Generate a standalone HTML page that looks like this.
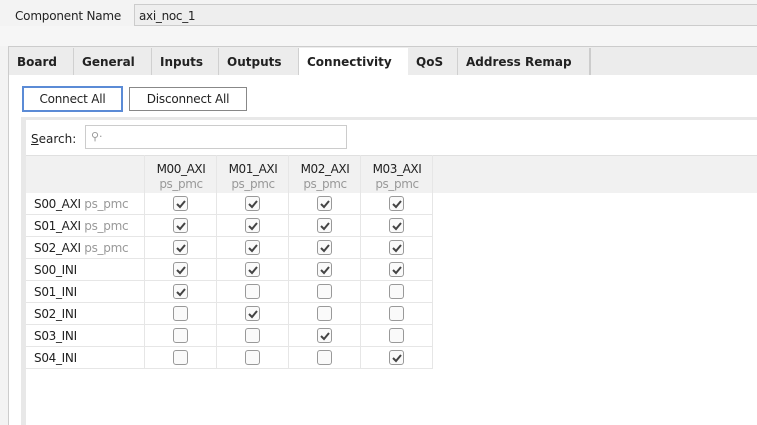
<!DOCTYPE html>
<html><head><style>
*{margin:0;padding:0;box-sizing:border-box}
body{width:757px;height:425px;background:#f3f3f3;font-family:"DejaVu Sans",sans-serif;font-size:12px;color:#222;position:relative;overflow:hidden}
.a{position:absolute}
.tab{position:absolute;top:48px;height:27px;line-height:28px;font-weight:bold;font-size:12px;padding-left:8px;border-right:1px solid #d0d0d0;color:#222}
.cb{position:absolute;width:15px;height:15px;border:1px solid #999;border-radius:3px;background:#fafafa}
.cb svg{position:absolute;left:1px;top:1px}
.rl{position:absolute;left:34px;font-size:12px;color:#222;letter-spacing:-0.3px}
.rl span{color:#999}
</style></head><body>
<div class="a" style="left:15px;top:9px;font-size:12px;letter-spacing:-0.2px">Component Name</div>
<div class="a" style="left:134px;top:4px;width:630px;height:22px;border:1px solid #ccc;background:#eee;padding:4px 4px;font-size:12px;letter-spacing:-0.3px">axi_noc_1</div>
<div class="a" style="left:0;top:26px;width:757px;height:20px;background:#f6f6f6"></div>
<div class="a" style="left:8px;top:46px;width:749px;height:379px;border-left:1px solid #ccc;border-top:1px solid #ccc;background:#ececec"></div>
<div class="a" style="left:9px;top:75px;width:748px;height:350px;background:#fff"></div>
<div class="tab" style="left:9px;width:65px">Board</div>
<div class="tab" style="left:74px;width:78px">General</div>
<div class="tab" style="left:152px;width:67px">Inputs</div>
<div class="tab" style="left:219px;width:80px">Outputs</div>
<div class="tab" style="left:299px;width:109px;background:#fff;border-right:none">Connectivity</div>
<div class="tab" style="left:408px;width:50px">QoS</div>
<div class="tab" style="left:458px;width:133px;border-right:2px solid #ccc">Address Remap</div>
<div class="a" style="left:22px;top:86px;width:101px;height:26px;border:2px solid #5b8bd6;background:#fff;text-align:center;line-height:23px;font-size:12px;letter-spacing:-0.2px">Connect All</div>
<div class="a" style="left:129px;top:87px;width:118px;height:24px;border:1px solid #888;background:#fff;text-align:center;line-height:22px;font-size:12px;letter-spacing:-0.2px">Disconnect All</div>
<div class="a" style="left:21px;top:117px;width:736px;height:308px;background:#e8e8e8"></div>
<div class="a" style="left:26px;top:120px;width:731px;height:305px;background:#fff"></div>
<div class="a" style="left:31px;top:132px;font-size:12px"><u>S</u>earch:</div>
<div class="a" style="left:85px;top:125px;width:262px;height:24px;border:1px solid #ccc;background:#fff;color:#999;padding:4px 5px;font-size:11px">⚲·</div>
<div class="a" style="left:26px;top:155px;width:731px;height:38px;background:#f1f1f1;border-top:1px solid #e0e0e0"></div>
<svg class="a" style="left:26px;top:155px" width="420" height="216">
<g stroke="#e6e6e6" stroke-width="1">
<line x1="118.5" y1="0" x2="118.5" y2="214"/><line x1="190.5" y1="0" x2="190.5" y2="214"/><line x1="262.5" y1="0" x2="262.5" y2="214"/><line x1="334.5" y1="0" x2="334.5" y2="214"/><line x1="406.5" y1="0" x2="406.5" y2="214"/>
<line x1="0" y1="59.5" x2="406" y2="59.5"/><line x1="0" y1="81.5" x2="406" y2="81.5"/><line x1="0" y1="103.5" x2="406" y2="103.5"/><line x1="0" y1="125.5" x2="406" y2="125.5"/><line x1="0" y1="147.5" x2="406" y2="147.5"/><line x1="0" y1="169.5" x2="406" y2="169.5"/><line x1="0" y1="191.5" x2="406" y2="191.5"/><line x1="0" y1="213.5" x2="406" y2="213.5"/>
</g>
<g font-family="DejaVu Sans,sans-serif" font-size="12" text-anchor="middle" letter-spacing="-0.4">
<text x="155" y="18" fill="#222">M00_AXI</text><text x="155" y="33" fill="#999">ps_pmc</text>
<text x="227" y="18" fill="#222">M01_AXI</text><text x="227" y="33" fill="#999">ps_pmc</text>
<text x="299" y="18" fill="#222">M02_AXI</text><text x="299" y="33" fill="#999">ps_pmc</text>
<text x="371" y="18" fill="#222">M03_AXI</text><text x="371" y="33" fill="#999">ps_pmc</text>
</g>
</svg>
<div class="rl" style="top:197px">S00_AXI <span>ps_pmc</span></div>
<div class="rl" style="top:219px">S01_AXI <span>ps_pmc</span></div>
<div class="rl" style="top:241px">S02_AXI <span>ps_pmc</span></div>
<div class="rl" style="top:263px">S00_INI</div>
<div class="rl" style="top:285px">S01_INI</div>
<div class="rl" style="top:307px">S02_INI</div>
<div class="rl" style="top:329px">S03_INI</div>
<div class="rl" style="top:351px">S04_INI</div>
<div id="g"></div>
<script>
var m=[[1,1,1,1],[1,1,1,1],[1,1,1,1],[1,1,1,1],[1,0,0,0],[0,1,0,0],[0,0,1,0],[0,0,0,1]];
var xs=[173,245,317,389],h='';
for(var r=0;r<8;r++)for(var c=0;c<4;c++){
h+='<div class="cb" style="left:'+xs[c]+'px;top:'+(196+r*22)+'px">'+(m[r][c]?'<svg width="12" height="12"><path d="M2 6 L5 9 L10 3" stroke="#444" stroke-width="2" fill="none"/></svg>':'')+'</div>';}
document.getElementById('g').innerHTML=h;
</script>
</body></html>
